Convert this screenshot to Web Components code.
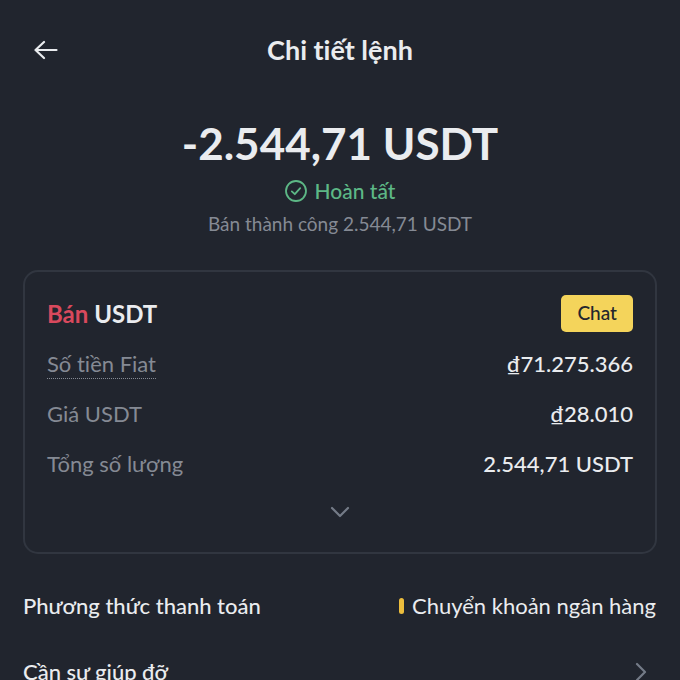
<!DOCTYPE html>
<html lang="vi">
<head>
<meta charset="utf-8">
<meta name="viewport" content="width=device-width, initial-scale=1">
<title>Chi tiết lệnh</title>
<style>
    body {
        margin: 0;
        background: #21252e;
        color: #eaecef;
        font: 400 22px/28px Lato, "Noto Sans", sans-serif;
        font-variant-ligatures: none;
    }
</style>
</head>
<body>
<order-page></order-page>

<script>
class PageHeader extends HTMLElement {
    constructor() {
        super();
        this.attachShadow({ mode: 'open' });
        this.shadowRoot.innerHTML = `
        <style>
            :host {
                display: grid;
                grid-template-columns: 48px 1fr 48px;
                align-items: center;
                height: 52px;
                padding: 24px 22px;
            }

            button {
                display: flex;
                justify-content: center;
                padding: 12px 0;
                border: 0;
                background: none;
                color: inherit;
                cursor: pointer;
            }

            h1 {
                margin: 0;
                font-size: 27px;
                line-height: 36px;
                font-weight: 700;
                text-align: center;
            }
        </style>
        <button type="button" aria-label="Quay lại">
            <svg width="24" height="24" viewBox="0 0 24 24" fill="none" stroke="currentColor" stroke-width="2.2" stroke-linecap="round" stroke-linejoin="round">
                <path d="M22.5 12H1.5M10 4L1.5 12L10 20"/>
            </svg>
        </button>
        <h1><slot></slot></h1>
        `;
    }
}

class OrderSummary extends HTMLElement {
    constructor() {
        super();
        this.attachShadow({ mode: 'open' });
        this.shadowRoot.innerHTML = `
        <style>
            :host {
                display: flex;
                flex-direction: column;
                align-items: center;
                padding: 16px 24px 32px;
            }

            .amount {
                font-size: 44px;
                line-height: 54px;
                font-weight: 700;
            }

            .status {
                display: flex;
                align-items: center;
                gap: 8px;
                margin-top: 7px;
                color: #5db886;
                font-weight: 500;
                font-size: 21px;
            }

            .note {
                margin-top: 5px;
                color: #858a94;
                font-size: 19px;
            }
        </style>
        <div class="amount"><slot name="amount"></slot></div>
        <div class="status">
            <svg width="22" height="22" viewBox="0 0 22 22" fill="none" stroke="currentColor" stroke-width="1.8" stroke-linecap="round" stroke-linejoin="round">
                <circle cx="11" cy="11" r="10"/>
                <path d="M6.8 11.4L9.8 14.2L15.2 8.2"/>
            </svg>
            <slot name="status"></slot>
        </div>
        <div class="note"><slot name="note"></slot></div>
        `;
    }
}

class OrderCard extends HTMLElement {
    constructor() {
        super();
        this.attachShadow({ mode: 'open' });
        this.shadowRoot.innerHTML = `
        <style>
            :host {
                display: block;
                margin: 0 23px;
                padding: 23px 22px 27px;
                border: 2px solid #313640;
                border-radius: 15px;
            }

            header {
                display: flex;
                justify-content: space-between;
                align-items: center;
                margin-bottom: 18px;
            }

            h2 {
                margin: 0;
                font-size: 24px;
                line-height: 32px;
                font-weight: 700;
            }

            .side {
                color: #d9495d;
            }

            button {
                border: 0;
                cursor: pointer;
            }

            .chat {
                padding: 4px 16px 5px;
                border-radius: 5px;
                background: #f4d45b;
                color: #23262d;
                font: 500 19px/28px Lato, "Noto Sans", sans-serif;
            }

            dl {
                display: flex;
                flex-direction: column;
                gap: 22px;
                margin: 0;
            }

            .more {
                display: flex;
                margin: 21px auto 0;
                padding: 6px 10px;
                background: none;
                color: #747b87;
            }
        </style>
        <header>
            <h2><span class="side"><slot name="side"></slot></span> <slot name="asset"></slot></h2>
            <button type="button" class="chat">Chat</button>
        </header>
        <dl><slot></slot></dl>
        <button type="button" class="more" aria-label="Xem thêm">
            <svg width="20" height="14" viewBox="0 0 20 14" fill="none" stroke="currentColor" stroke-width="2.2" stroke-linecap="round" stroke-linejoin="round">
                <path d="M2 3L10 11L18 3"/>
            </svg>
        </button>
        `;
    }
}

class DetailRow extends HTMLElement {
    constructor() {
        super();
        this.attachShadow({ mode: 'open' });
        this.shadowRoot.innerHTML = `
        <style>
            :host {
                display: flex;
                justify-content: space-between;
                align-items: center;
                height: 28px;
            }

            .label {
                color: #858a94;
            }

            :host([hint]) .label {
                border-bottom: 1px dotted #858a94;
            }

            .value {
                font-weight: 500;
            }
        </style>
        <span class="label"><slot name="label"></slot></span>
        <span class="value"><slot></slot></span>
        `;
    }
}

class PaymentRow extends HTMLElement {
    constructor() {
        super();
        this.attachShadow({ mode: 'open' });
        this.shadowRoot.innerHTML = `
        <style>
            :host {
                display: flex;
                justify-content: space-between;
                align-items: center;
                padding: 0 24px 0 23px;
            }

            .title {
                font-weight: 500;
            }

            .method {
                display: flex;
                align-items: center;
                gap: 8px;
            }

            .method::before {
                content: "";
                width: 5px;
                height: 16px;
                border-radius: 3px;
                background: #ecbd3d;
            }
        </style>
        <span class="title"><slot name="label"></slot></span>
        <span class="method"><slot></slot></span>
        `;
    }
}

class LinkRow extends HTMLElement {
    constructor() {
        super();
        this.attachShadow({ mode: 'open' });
        this.shadowRoot.innerHTML = `
        <style>
            :host {
                display: block;
            }

            a {
                display: flex;
                justify-content: space-between;
                align-items: center;
                padding: 0 32px 0 23px;
                color: inherit;
                font-weight: 500;
                text-decoration: none;
            }

            svg {
                color: #747b87;
            }
        </style>
        <a href="#help">
            <slot></slot>
            <svg width="14" height="20" viewBox="0 0 14 20" fill="none" stroke="currentColor" stroke-width="2.2" stroke-linecap="round" stroke-linejoin="round">
                <path d="M3 2L11 10L3 18"/>
            </svg>
        </a>
        `;
    }
}

class OrderPage extends HTMLElement {
    constructor() {
        super();
        this.attachShadow({ mode: 'open' });
        this.shadowRoot.innerHTML = `
        <style>
            :host {
                display: block;
                height: 100vh;
                overflow: hidden auto;
                scrollbar-width: none;
            }

            .links {
                display: flex;
                flex-direction: column;
                gap: 38px;
                padding: 38px 0;
            }
        </style>
        <page-header>Chi tiết lệnh</page-header>
        <order-summary>
            <span slot="amount">-2.544,71 USDT</span>
            <span slot="status">Hoàn tất</span>
            <span slot="note">Bán thành công 2.544,71 USDT</span>
        </order-summary>
        <order-card>
            <span slot="side">Bán</span>
            <span slot="asset">USDT</span>
            <detail-row hint><span slot="label">Số tiền Fiat</span>₫71.275.366</detail-row>
            <detail-row><span slot="label">Giá USDT</span>₫28.010</detail-row>
            <detail-row><span slot="label">Tổng số lượng</span>2.544,71 USDT</detail-row>
        </order-card>
        <div class="links">
            <payment-row><span slot="label">Phương thức thanh toán</span>Chuyển khoản ngân hàng</payment-row>
            <link-row>Cần sự giúp đỡ</link-row>
        </div>
        `;
    }
}

customElements.define('page-header', PageHeader);
customElements.define('order-summary', OrderSummary);
customElements.define('order-card', OrderCard);
customElements.define('detail-row', DetailRow);
customElements.define('payment-row', PaymentRow);
customElements.define('link-row', LinkRow);
customElements.define('order-page', OrderPage);
</script>
</body>
</html>
